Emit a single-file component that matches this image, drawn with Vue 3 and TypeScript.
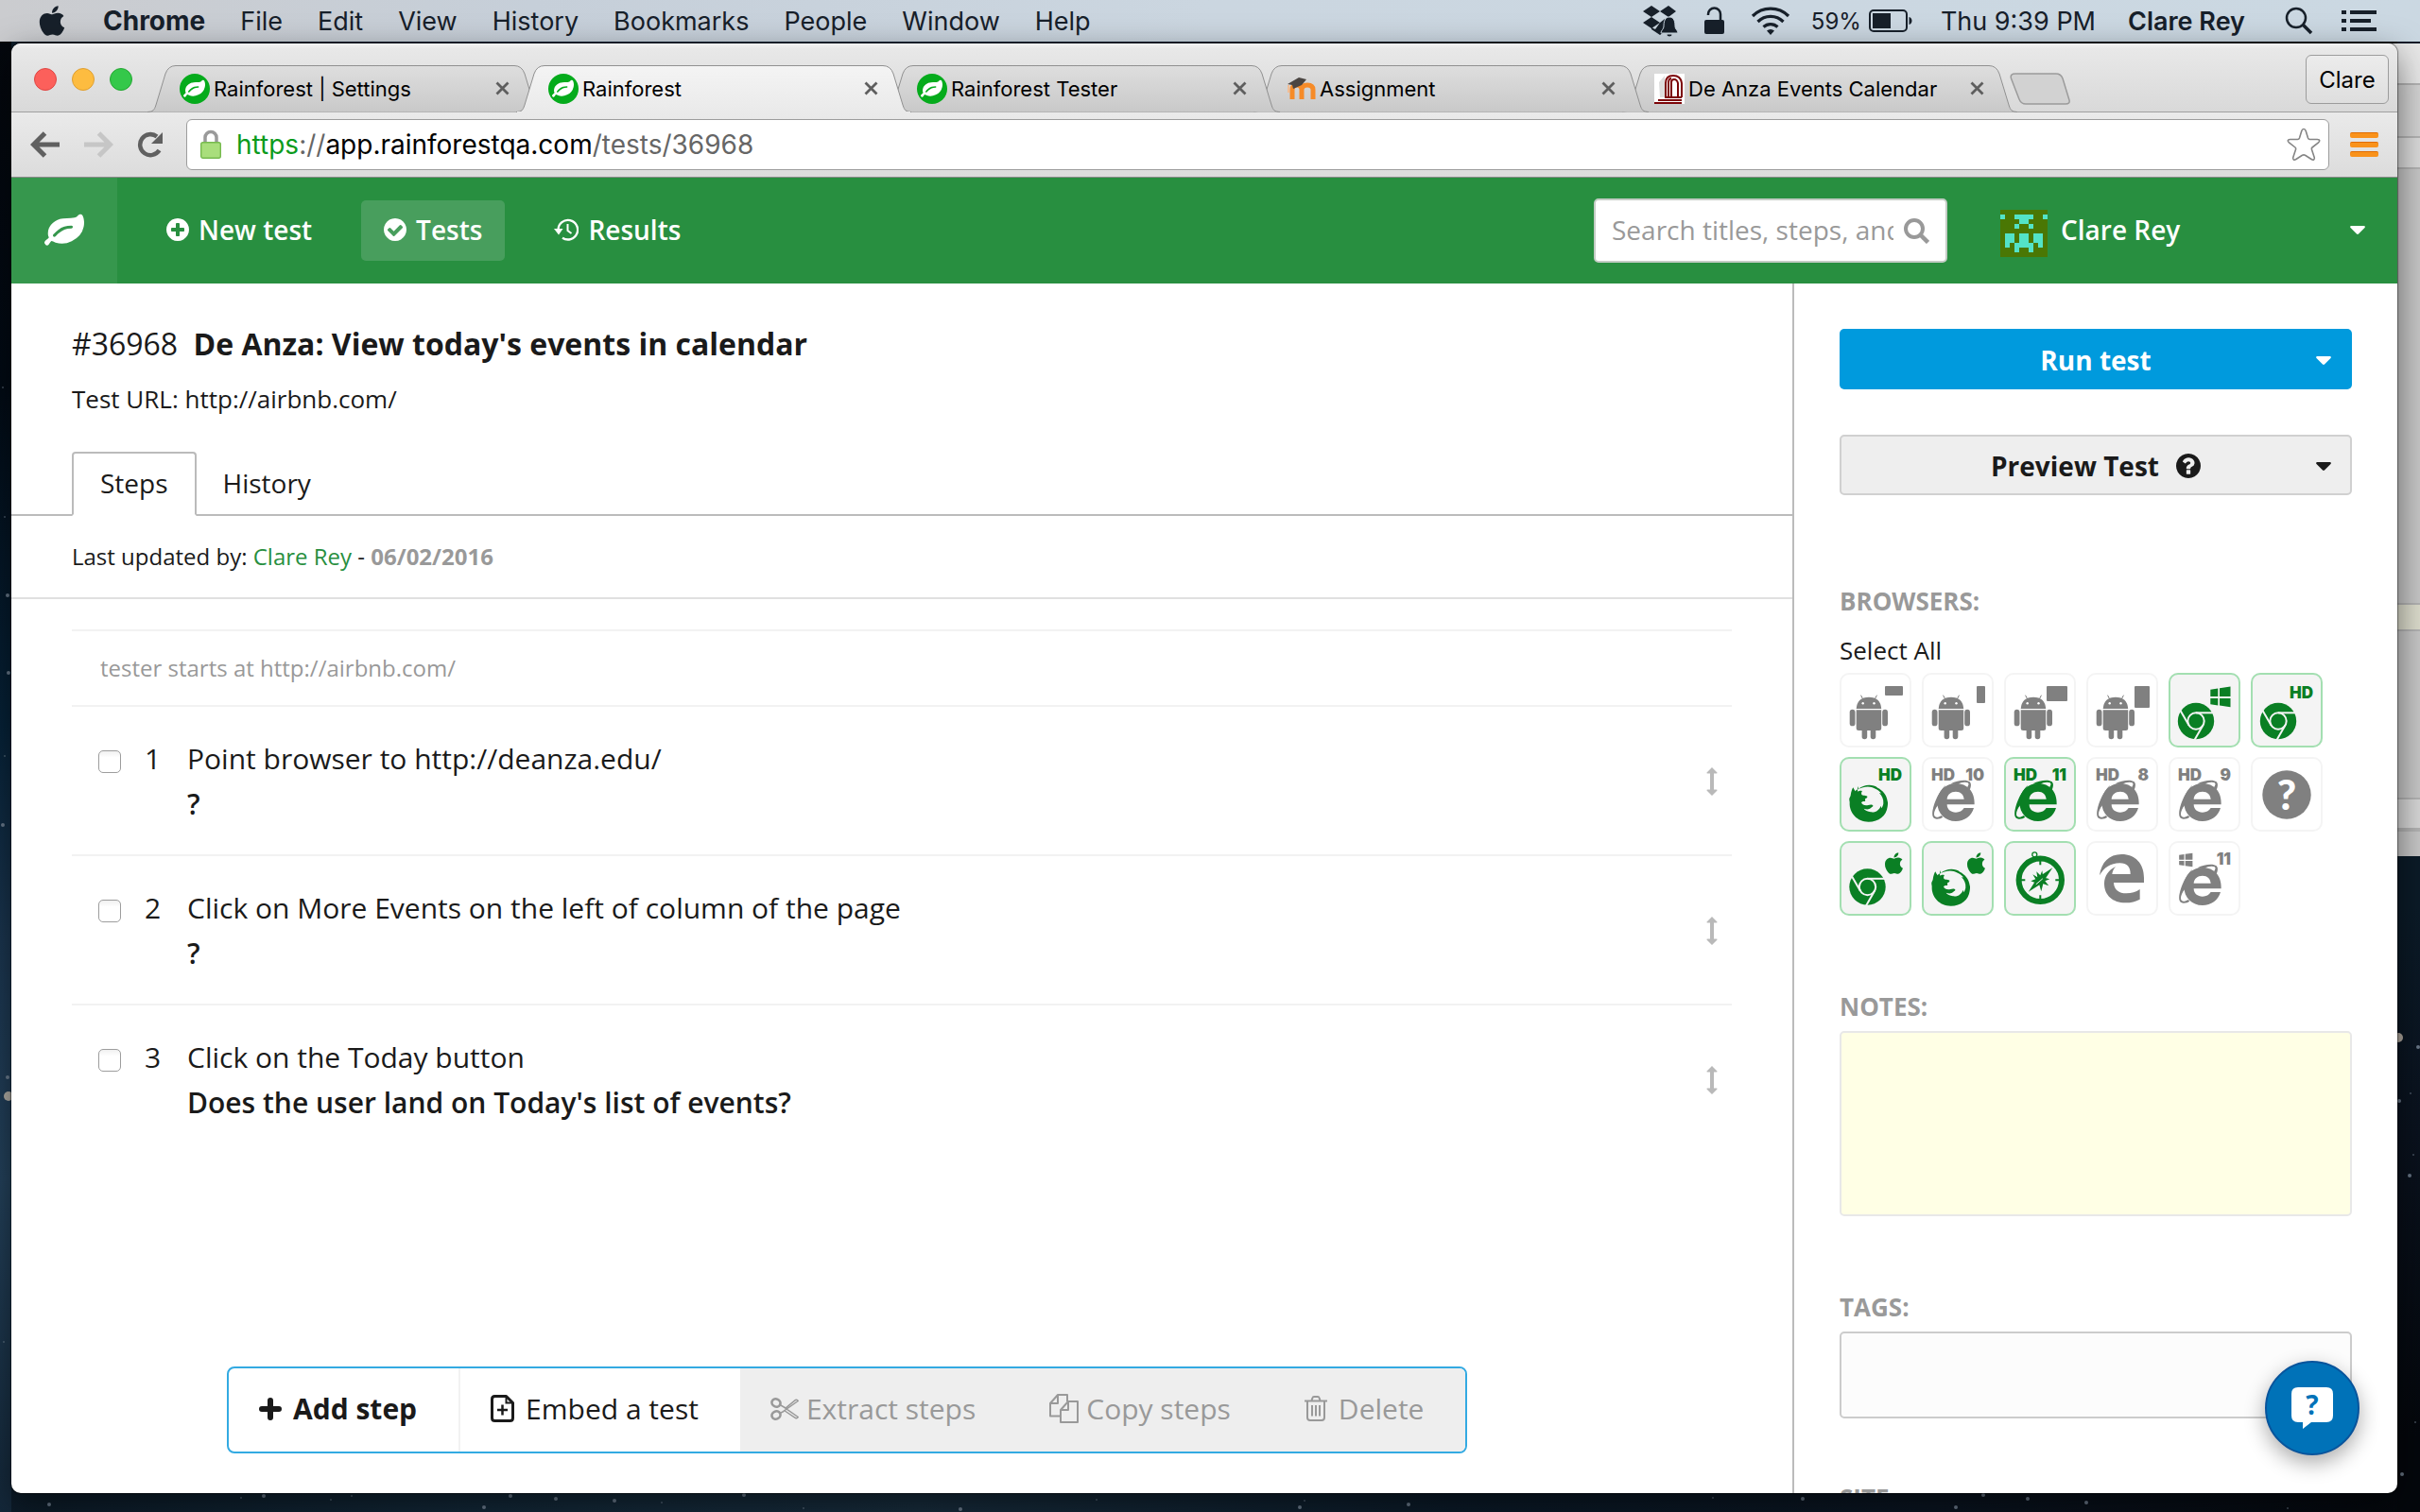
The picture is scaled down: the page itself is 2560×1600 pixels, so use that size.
<script setup lang="ts">
import { ref } from 'vue'

const menus = ['File', 'Edit', 'View', 'History', 'Bookmarks', 'People', 'Window', 'Help']

interface Tab { title: string; icon: 'leaf' | 'moodle' | 'arch'; active?: boolean }
const tabs: Tab[] = [
  { title: 'Rainforest | Settings', icon: 'leaf' },
  { title: 'Rainforest', icon: 'leaf', active: true },
  { title: 'Rainforest Tester', icon: 'leaf' },
  { title: 'Assignment', icon: 'moodle' },
  { title: 'De Anza Events Calendar', icon: 'arch' },
]

const steps = ref([
  { action: 'Point browser to http://deanza.edu/', question: '?', checked: false },
  { action: 'Click on More Events on the left of column of the page', question: '?', checked: false },
  { action: 'Click on the Today button', question: "Does the user land on Today's list of events?", checked: false },
])

interface Browser {
  name: string
  kind: 'android' | 'chrome' | 'firefox' | 'ie' | 'safari' | 'edge' | 'unknown'
  on?: boolean
  screen?: [number, number]
  hd?: 'left' | 'right'
  version?: string
  os?: 'windows' | 'windows-small' | 'apple'
}
const browsers = ref<Browser[]>([
  { name: 'Android phone landscape', kind: 'android', screen: [19, 10] },
  { name: 'Android phone portrait', kind: 'android', screen: [9, 18] },
  { name: 'Android tablet landscape', kind: 'android', screen: [22, 16] },
  { name: 'Android tablet portrait', kind: 'android', screen: [16, 23] },
  { name: 'Chrome on Windows', kind: 'chrome', on: true, os: 'windows' },
  { name: 'Chrome HD', kind: 'chrome', on: true, hd: 'right' },
  { name: 'Firefox HD', kind: 'firefox', on: true, hd: 'right' },
  { name: 'Internet Explorer 10 HD', kind: 'ie', hd: 'left', version: '10' },
  { name: 'Internet Explorer 11 HD', kind: 'ie', on: true, hd: 'left', version: '11' },
  { name: 'Internet Explorer 8 HD', kind: 'ie', hd: 'left', version: '8' },
  { name: 'Internet Explorer 9 HD', kind: 'ie', hd: 'left', version: '9' },
  { name: 'Other browser', kind: 'unknown' },
  { name: 'Chrome on OS X', kind: 'chrome', on: true, os: 'apple' },
  { name: 'Firefox on OS X', kind: 'firefox', on: true, os: 'apple' },
  { name: 'Safari', kind: 'safari', on: true },
  { name: 'Edge', kind: 'edge' },
  { name: 'Internet Explorer 11 on Windows', kind: 'ie', os: 'windows-small', version: '11' },
])

const avatarRows = ['', '0345 69', '45', '36', '', '124578', '124578', '134568', '36', '']
const avatarCells = avatarRows.flatMap((row, y) => [...row.replace(' ', '')].map((x) => ({ x: Number(x), y })))

const stars = [
  [3, 410, 1], [5, 547, 1], [8, 630, 2], [9, 712, 2], [3, 873, 2], [5, 800, 1], [8, 1140, 2], [9, 1160, 5], [4, 1420, 1],
  [52, 1592, 2], [255, 1585, 1], [279, 1583, 2], [350, 1587, 1], [372, 1583, 1], [512, 1595, 2], [540, 1583, 2], [588, 1586, 2],
  [650, 1588, 2], [700, 1590, 1], [787, 1582, 2], [850, 1596, 1], [1016, 1597, 2], [1160, 1587, 1], [1375, 1595, 2], [1380, 1588, 1],
  [1490, 1592, 2], [1812, 1585, 1], [1907, 1586, 2], [2069, 1595, 2], [2098, 1582, 2], [2145, 1586, 2], [2207, 1590, 2], [2420, 1596, 1],
  [2537, 1098, 5], [2558, 1108, 2], [2550, 1157, 1], [2538, 1165, 2], [2549, 1244, 2], [2555, 1505, 1], [2541, 1560, 2], [2553, 1222, 1],
]

const search = ref('')
const notes = ref('')
const tags = ref('')

const disc = 'm0 0M1664 896q0 209-103 385.5t-279.5 279.5-385.5 103-385.5-103-279.5-279.5-103-385.5 103-385.5 279.5-279.5 385.5-103 385.5 103 279.5 279.5 103 385.5z'
const plusDisc = 'M1344 960v-128q0-26-19-45t-45-19h-256v-256q0-26-19-45t-45-19h-128q-26 0-45 19t-19 45v256h-256q-26 0-45 19t-19 45v128q0 26 19 45t45 19h256v256q0 26 19 45t45 19h128q26 0 45-19t19-45v-256h256q26 0 45-19t19-45z' + disc
const checkDisc = 'M1412 734q0-28-18-46l-91-90q-19-19-45-19t-45 19l-408 407-226-226q-19-19-45-19t-45 19l-91 90q-18 18-18 46 0 27 18 45l362 362q19 19 45 19 27 0 46-19l543-543q18-18 18-45z' + disc
const questionDisc = 'M1024 1376v-192q0-14-9-23t-23-9h-192q-14 0-23 9t-9 23v192q0 14 9 23t23 9h192q14 0 23-9t9-23zm256-672q0-88-55.5-163t-138.5-116-170-41q-243 0-371 213-15 24 8 42l132 100q7 6 19 6 16 0 25-12 53-68 86-92 34-24 86-24 48 0 85.5 26t37.5 59q0 38-20 61t-68 45q-63 28-115.5 86.5t-52.5 125.5v36q0 14 9 23t23 9h192q14 0 23-9t9-23q0-19 21.5-49.5t54.5-49.5q32-18 49-28.5t46-35 44.5-48 28-60.5 12.5-81z' + disc
const leaf = 'M1280 704q0-26-19-45t-45-19q-172 0-318 49.5t-259.5 134-235.5 219.5q-19 21-19 45 0 26 19 45t45 19q24 0 45-19 27-24 74-71t67-66q137-124 268.5-176t313.5-52q26 0 45-19t19-45zm512-198q0 95-20 193-46 224-184.5 383t-357.5 268q-214 108-438 108-148 0-286-47-15-5-88-42t-96-37q-16 0-39.5 32t-45 70-52.5 70-60 32q-43 0-63.5-17.5t-45.5-59.5q-2-4-6-11t-5.5-10-3-9.5-1.5-13.5q0-35 31-73.5t68-65.5 68-56 31-48q0-4-14-38t-16-44q-9-51-9-104 0-115 43.5-220t119-184.5 170.5-139 204-95.5q55-18 145-25.5t179.5-9 178.5-6 163.5-24 113.5-56.5l29.5-29.5 29.5-28 27-20 36.5-16 43.5-4.5q39 0 70.5 46t47.5 112 24 124 8 96z'
const apple = 'M318.7 268.7c-.2-36.7 16.4-64.4 50-84.8-18.8-26.9-47.2-41.7-84.7-44.6-35.5-2.8-74.3 20.7-88.5 20.7-15 0-49.4-19.7-76.4-19.7C63.3 141.2 4 184.8 4 273.5q0 39.3 14.4 81.2c12.8 36.7 59 126.7 107.2 125.2 25.2-.6 43-17.9 75.8-17.9 31.8 0 48.3 17.9 76.4 17.9 48.6-.7 90.4-82.5 102.6-119.3-65.2-30.7-61.7-90-61.7-91.9zm-56.6-164.2c27.3-32.4 24.8-61.9 24-72.5-24.1 1.4-52 16.4-67.9 34.9-17.5 19.8-27.8 44.3-25.6 71.9 26.1 2 49.9-11.4 69.5-34.3z'
</script>

<template>
  <div class="desktop">
    <svg class="stars" aria-hidden="true">
      <circle v-for="([x, y, r], i) in stars" :key="i" :cx="x" :cy="y" :r="r" :fill="r > 3 ? '#d9cdbd' : '#7f8fa0'" :opacity="r === 1 ? 0.5 : 0.8" />
    </svg>

    <header class="menubar">
      <svg class="apple" viewBox="0 28 384 456"><path :d="apple" fill="currentColor" /></svg>
      <b>Chrome</b>
      <span v-for="m in menus" :key="m">{{ m }}</span>
      <div class="status">
        <svg width="37" height="34" viewBox="0 0 37 34" fill="currentColor">
          <path d="M9 1l9 6-9 6-9-6zM27 1l8 6-8 6-9-6zM9 13l9 6-9 6-9-6zM18 19l5-4 3 2-4 6v6l-4 3-9-6v-2l4 2z" />
          <path d="M28 13c5 0 6 5 6 10 0 3 3 4 3 7H19c0-3 3-4 3-7 0-5 1-10 6-10zM25 31h6c0 4-6 4-6 0z" stroke="#cbd7e1" stroke-width="1" />
        </svg>
        <svg class="open-lock" width="21" height="30" viewBox="0 0 21 30"><rect y="14" width="21" height="15" rx="2" fill="currentColor" /><path d="M4 9V8a6.500 6.500 0 0 1 13 0v7" fill="none" stroke="currentColor" stroke-width="2.500" /></svg>
        <svg class="wifi" width="42" height="30" viewBox="0 0 42 30" fill="none" stroke="currentColor" stroke-width="3.200"><path d="M2 10a27 27 0 0 1 38 0M7.500 16a19 19 0 0 1 27 0M13.500 21.500a11 11 0 0 1 15 0" /><path d="M17 25.500a6 6 0 0 1 8 0l-4 4.500z" fill="currentColor" stroke="none" /></svg>
        <span class="percent">59%</span>
        <svg class="battery" width="46" height="24" viewBox="0 0 46 24"><rect x="1" y="1" width="39" height="22" rx="4" fill="none" stroke="currentColor" stroke-width="2" /><rect x="4" y="4" width="19" height="16" fill="currentColor" /><path d="M42.500 8c4 1 4 7 0 8z" fill="currentColor" /></svg>
        <span class="clock">Thu 9:39 PM</span>
        <span class="user">Clare Rey</span>
        <svg class="spot" width="30" height="30" viewBox="0 0 30 30" fill="none" stroke="currentColor" stroke-width="2.500"><circle cx="12" cy="12" r="10" /><path d="M19 19l9 9" stroke-width="3.500" /></svg>
        <svg width="37" height="22" viewBox="0 0 37 22" fill="currentColor"><path d="M0 0h5v4H0zM9 0h28v4H9zM0 9h5v4H0zM9 9h22v4H9zM0 18h5v4H0zM9 18h28v4H9z" /></svg>
      </div>
    </header>

    <div class="behind" aria-hidden="true">
      <i class="b-title"></i><i class="b-tabs"></i><i class="b-tool"></i><i class="b-page"></i><i class="b-note"></i><i class="b-page2"></i><i class="b-foot"></i><i class="b-end"></i>
    </div>

    <div class="window">
      <div class="titlebar">
        <div class="lights"><i class="red"></i><i class="yellow"></i><i class="green"></i></div>
        <div class="tabs">
          <div v-for="(t, i) in tabs" :key="i" class="tab" :class="{ active: t.active }" :style="{ zIndex: t.active ? 9 : 5 - i }">
            <svg class="tab-shape" viewBox="0 0 418 51" aria-hidden="true">
              <defs>
                <linearGradient :id="'tab' + i" x1="0" y1="0" x2="0" y2="1">
                  <stop offset="0" :stop-color="t.active ? '#f4f4f4' : '#dedede'" />
                  <stop offset="1" :stop-color="t.active ? '#eaeaea' : '#c9c9c9'" />
                </linearGradient>
              </defs>
              <path d="M0 49.500C6 49 7 48 9 42L19 9Q22 .5 30 .5H388Q396 .5 399 9L409 42C411 48 412 49 418 49.500" :fill="`url(#tab${i})`" stroke="#909090" />
              <path v-if="t.active" d="M1 50.500H417" stroke="#eaeaea" stroke-width="3" />
            </svg>
            <svg class="favicon" viewBox="0 0 32 32">
              <template v-if="t.icon === 'leaf'">
                <circle cx="16" cy="16" r="16" fill="#05ab1c" />
                <svg x="4" y="5" width="23" height="23" viewBox="0 0 1792 1792"><path :d="leaf" fill="#fff" /></svg>
              </template>
              <template v-else-if="t.icon === 'moodle'">
                <path d="M7 27V17q0-5 5-5t5 5v10m0-10q0-5 6-5t6 5v10" fill="none" stroke="#f68b28" stroke-width="5" />
                <path d="M2 11L14 4l8 2-5 6-9 4-1-4z" fill="#4a4542" /><path d="M3 12v8" stroke="#f3bd94" stroke-width="2" />
              </template>
              <template v-else>
                <rect width="32" height="32" fill="#fff" />
                <path d="M5 9l6-7v23H6z" fill="#ddd" />
                <path d="M12 25V10q0-8 8-8t9 8v15M15 25V10q0-5 3-5M18 25V9q0-3 3-3t4 4v15M11 25h18" fill="none" stroke="#7c0508" stroke-width="2" />
                <path d="M4 28h25M0 31h29" stroke="#7c0508" stroke-width="2" />
              </template>
            </svg>
            <span class="tab-title">{{ t.title }}</span>
            <button class="close" aria-label="Close tab"><svg width="15" height="15" viewBox="0 0 15 15"><path d="M1.500 1.500l12 12m0-12l-12 12" stroke="#5e5e5e" stroke-width="2.800" /></svg></button>
          </div>
          <button class="new-tab" aria-label="New tab">
            <svg width="64" height="34" viewBox="0 0 64 34"><path d="M6 1H49Q54 1 56 6L63 29Q64 33 59 33H17Q12 33 10 28L1.500 6Q0 1 6 1z" fill="#d2d2d2" stroke="#9b9b9b" stroke-width="1.500" /></svg>
          </button>
        </div>
        <button class="profile">Clare</button>
      </div>

      <div class="toolbar">
        <button aria-label="Back"><svg width="32" height="28" viewBox="0 0 32 28" fill="none" stroke="#606060" stroke-width="5"><path d="M3 14H31M15.500 2L3.500 14l12 12" /></svg></button>
        <button aria-label="Forward"><svg width="32" height="28" viewBox="0 0 32 28" fill="none" stroke="#c6c6c6" stroke-width="5"><path d="M29 14H1M16.500 2l12 12-12 12" /></svg></button>
        <button aria-label="Reload"><svg width="29" height="28" viewBox="0 0 29 28"><path d="M24.500 20A11 11 0 1 1 22 5.500" fill="none" stroke="#606060" stroke-width="4.500" /><path d="M28 1v12H16z" fill="#606060" /></svg></button>
        <div class="omnibox">
          <svg width="22" height="32" viewBox="0 0 22 32"><path d="M5 15V8.500a6 6 0 0 1 12 0V15" fill="none" stroke="#9a9a9a" stroke-width="3.500" /><rect x=".7" y="13.700" width="20.600" height="16.600" rx="2" fill="#a9de7c" stroke="#76ba4e" stroke-width="1.400" /></svg>
          <p class="url"><em>https</em>://<b>app.rainforestqa.com</b>/tests/36968</p>
          <svg class="star" width="36" height="36" viewBox="0 0 36 36"><path d="M18 1.500q1.500 0 2.200 2L22.500 11q.5 1.500 2 1.500h8q2 0 2.200 1T33.500 16l-6.500 5q-1 .8-.6 2l2.800 8.500q.6 2-.5 2.500t-2.600-.5L19.500 29.300q-1.500-.8-3 0L9.900 33.500q-1.500 1-2.600.5t-.5-2.500L9.600 23q.4-1.200-.6-2l-6.500-5Q1 14.500 1.300 13.500t2.200-1h8q1.500 0 2-1.500l2.300-7.500q.7-2 2.200-2z" fill="#fff" stroke="#858585" stroke-width="1.600" /></svg>
        </div>
        <button class="burger" aria-label="Menu"><i></i><i></i><i></i></button>
      </div>

      <nav class="appbar">
        <a href="#" class="logo" aria-label="Home"><svg width="42" height="36" viewBox="0 100 1792 1536"><path :d="leaf" fill="#fff" /></svg></a>
        <a href="#" class="nav-item"><svg width="24" height="24" viewBox="128 128 1536 1536"><path :d="plusDisc" fill="#fff" fill-rule="evenodd" /></svg>New test</a>
        <a href="#" class="nav-item current"><svg width="24" height="24" viewBox="128 128 1536 1536"><path :d="checkDisc" fill="#fff" fill-rule="evenodd" /></svg>Tests</a>
        <a href="#" class="nav-item"><svg width="26" height="24" viewBox="0 0 26 24"><path d="M4.500 12A10.300 10.300 0 1 1 9 20.700" fill="none" stroke="#fff" stroke-width="2.300" /><path d="M0 11h9.500L5 17.500z" fill="#fff" /><path d="M14.500 6v7l4 3" fill="none" stroke="#fff" stroke-width="2" /></svg>Results</a>
        <label class="search">
          <input v-model="search" type="text" placeholder="Search titles, steps, and tags" aria-label="Search titles, steps, and tags">
          <svg width="27" height="27" viewBox="0 0 27 27" fill="none" stroke="#999"><circle cx="11" cy="11" r="9" stroke-width="4" /><path d="M17.500 17.500l8 8" stroke-width="4.500" /></svg>
        </label>
        <button class="account">
          <svg class="avatar" width="50" height="50" viewBox="0 0 10 10" shape-rendering="crispEdges"><rect width="10" height="10" fill="#4a7704" /><rect v-for="(c, i) in avatarCells" :key="i" :x="c.x" :y="c.y" width="1" height="1" fill="#53e3c8" /></svg>
          Clare Rey
          <svg class="caret" width="16" height="9" viewBox="0 0 16 9"><path d="M1 0h14q1.500.5.5 2L9 8.500q-1 .8-2 0L.5 2Q-.5.5 1 0z" fill="currentColor" /></svg>
        </button>
      </nav>

      <div class="page">
        <main class="main">
          <div class="head">
            <h1><span>#36968</span> De Anza: View today's events in calendar</h1>
            <p>Test URL: http://airbnb.com/</p>
          </div>
          <div class="page-tabs" role="tablist">
            <button role="tab" class="selected" aria-selected="true">Steps</button>
            <button role="tab" aria-selected="false">History</button>
          </div>
          <p class="updated">Last updated by: <a href="#">Clare Rey</a> - <b>06/02/2016</b></p>
          <ol class="steps">
            <li class="start">tester starts at http://airbnb.com/</li>
            <li v-for="(s, i) in steps" :key="i" class="step">
              <input :id="`step${i}`" v-model="s.checked" type="checkbox">
              <span class="num">{{ i + 1 }}</span>
              <label :for="`step${i}`">{{ s.action }}<strong>{{ s.question }}</strong></label>
              <svg class="drag" width="12" height="30" viewBox="0 0 12 30"><path d="M6 0l5.500 5.500q.5 1-1 1H8v17h2.500q1.500 0 1 1L6 30 .5 24.500q-.5-1 1-1H4v-17H1.500q-1.500 0-1-1z" fill="#b9b9b9" /></svg>
            </li>
          </ol>
          <div class="actions">
            <button class="add"><svg width="24" height="24" viewBox="0 0 24 24"><path d="M12 3v18M3 12h18" stroke="currentColor" stroke-width="6" stroke-linecap="round" /></svg>Add step</button>
            <button><svg width="25" height="29" viewBox="0 0 25 29" fill="none" stroke="currentColor" stroke-width="3"><path d="M4.500 1.500H16.500l7 7V24.500q0 3-3 3H4.500q-3 0-3-3V4.500q0-3 3-3z" stroke-linejoin="round" /><path d="M16.500 2v6.500h6.500" stroke-width="2" /><path d="M12.500 10.500v11M7 16h11" stroke-width="2.500" /></svg>Embed a test</button>
            <button class="tight" disabled><svg width="30" height="24" viewBox="0 0 30 24" fill="none" stroke="currentColor"><ellipse cx="6" cy="5.500" rx="4.600" ry="4" stroke-width="2.600" transform="rotate(25 6 5.500)" /><ellipse cx="6" cy="18.500" rx="4.600" ry="4" stroke-width="2.600" transform="rotate(-25 6 18.500)" /><path d="M10 7.500L16 11 26.500 2.500q2-.7 2.700 1L12 15.500l-2.500 1M10 16.500l4-2M14 9.800L29.200 20.500q-.7 1.700-2.700 1L14.500 13.500" stroke-width="1.500" /></svg>Extract steps</button>
            <button class="tight" disabled><svg width="31" height="31" viewBox="0 0 31 31" fill="none" stroke="currentColor" stroke-width="2" stroke-linejoin="round"><path d="M12 23.500H1V10L9 1h10v7M1 10h8V1M12 30V17l8-9h10v22zM12 17h8V8" /></svg>Copy steps</button>
            <button disabled><svg width="24" height="27" viewBox="0 0 24 27" fill="none" stroke="currentColor" stroke-width="2"><path d="M0 5.500h24M3 5.500V23q0 3 3 3h12q3 0 3-3V5.500M7.500 5l1-3q.3-1 1.500-1h4q1.200 0 1.500 1l1 3M8 10v11.500M12 10v11.500M16 10v11.500" /></svg>Delete</button>
          </div>
        </main>

        <aside class="side">
          <button class="run">Run test<svg class="caret" width="16" height="9" viewBox="0 0 16 9"><path d="M1 0h14q1.500.5.5 2L9 8.500q-1 .8-2 0L.5 2Q-.5.5 1 0z" fill="currentColor" /></svg></button>
          <button class="preview">Preview Test<svg width="26" height="26" viewBox="128 128 1536 1536"><path :d="questionDisc" fill="currentColor" fill-rule="evenodd" /></svg><svg class="caret" width="16" height="9" viewBox="0 0 16 9"><path d="M1 0h14q1.500.5.5 2L9 8.500q-1 .8-2 0L.5 2Q-.5.5 1 0z" fill="currentColor" /></svg></button>

          <h2 class="browsers-title">Browsers:</h2>
          <a href="#" class="select-all">Select All</a>
          <div class="tiles">
            <button v-for="b in browsers" :key="b.name" class="tile" :class="{ on: b.on }" :aria-label="b.name" :aria-pressed="!!b.on" @click="b.on = !b.on">
              <svg width="76" height="79" viewBox="0 0 76 79" fill="currentColor">
                <g v-if="b.kind === 'android'">
                  <path d="M17.700 38q1-12.300 13.300-12.300T44.200 38zM17.700 39.200h26.500V58.500q0 2.500-2.500 2.500h-3.400v6.500a2.800 2.800 0 0 1-5.600 0V61h-3.500v6.500a2.800 2.800 0 0 1-5.600 0V61h-3.400q-2.500 0-2.500-2.500z" />
                  <rect x="10.700" y="38.700" width="5.800" height="17.600" rx="2.900" /><rect x="45.200" y="38.700" width="5.800" height="17.600" rx="2.900" />
                  <path d="M22.500 23.700l2.200 4M39.500 23.700l-2.200 4" stroke="currentColor" /><circle cx="24.700" cy="32.300" r="1.200" fill="#fff" /><circle cx="36.500" cy="32.300" r="1.200" fill="#fff" />
                  <rect v-if="b.screen" :x="67 - b.screen[0]" y="14" :width="b.screen[0]" :height="b.screen[1]" rx="1" />
                </g>
                <g v-else-if="b.kind === 'chrome'" :transform="b.os === 'apple' ? 'translate(29.500 48.500)' : 'translate(29 51)'">
                  <circle r="19.200" />
                  <g fill="none" stroke="#f4f4f4" stroke-width="2"><circle r="8.700" /><path v-for="a in [0, 120, 240]" :key="a" d="M0-8.700H19.500" :transform="`rotate(${a})`" /></g>
                </g>
                <path v-else-if="b.kind === 'firefox'" transform="scale(.33333) translate(-78 -306)" fill-rule="evenodd" d="M121 403c2 5 5 9 7 12c2-4 6-5 9-6c16-16 46-18 62-5c16 8 28 22 31 42c2 5 1 12 0 18c-3 28-28 48-60 48c-36 0-62-28-60-62c0-4-2-8-1-12c1-4 3-6 4-10c2-12 4-19 8-25zM138 408c20-11 42-10 57 1c7 4 13 9 15 13c-2-1-4-1-6-1c9 9 14 20 13 33c-1 7-3 11-6 15c-1-3-1-5-2-8c-5 13-15 22-32 20c-10-2-19-5-22-11c8 3 17 3 21-1c4-3 9-5 8-9c-2-4-10-3-15-1c-10 3-19-1-22-8c2-4 8-5 12-4c1-4 0-6 0-8c5-3 8-4 7-8c-1-3-16-2-18-6c-2-3 0-8 2-11c-7-1-8-2-14 2c-1-3-2-12 2-17z" />
                <g v-else-if="b.kind === 'ie'" transform="scale(.33333) translate(-336 -306)">
                  <path fill-rule="evenodd" d="M503 457H416c0 16 12 25 28 25c12 0 20-5 26-14H501c-7 26-30 42-57 42c-34 0-59-24-59-60c0-36 26-60 59-60c36 0 61 26 59 67zM416 440h54c-1-15-11-24-26-24c-16 0-27 9-28 24z" />
                  <path d="M412 395C392 414 376 445 370 478C368 495 372 503 384 503C392 503 398 500 403 497L398 492C388 499 377 500 375 490C374 480 380 468 388 458L398 420zM428 391C448 380 478 376 488 385C495 392 491 404 488 411L480 403C485 396 486 391 482 388C474 384 460 387 450 392z" />
                </g>
                <g v-else-if="b.kind === 'safari'" transform="translate(38.300 41.300)">
                  <circle r="22.700" fill="none" stroke="currentColor" stroke-width="6" /><circle cx="-6" cy="-27" r="2.500" fill="none" stroke="currentColor" stroke-width="1.300" />
                  <path d="M13-13L2.500 3-12.500 12.500-3-2.500zM-4-9L0-5 2-10 3-3 10-1 5 1 9 6 3 4 1 12-1 5-6 7-5 3-10 1-5-1-8-6-3-3zM-1-21h2v5h-2zM-1 16h2v5h-2zM16-1h5v2h-5zM-21-1h5v2h-5z" />
                  <path d="M-4.500 4.500L2.500-1.500" stroke="#f4f4f4" />
                </g>
                <path v-else-if="b.kind === 'edge'" transform="scale(.33333) translate(-858 -573)" d="M900 682C906 640 930 615 970 615C1014 615 1041 645 1041 690V705H945C946 728 962 739 985 739C1002 739 1015 735 1028 726V758C1015 765 1000 769 982 769C942 769 915 745 915 708C915 683 930 664 951 654C944 662 941 670 940 678H998C998 656 988 643 964 643C935 643 914 658 900 682z" />
                <g v-else>
                  <circle cx="38" cy="40" r="25.700" /><text x="38" y="56" class="mark">?</text>
                </g>
                <path v-if="b.os === 'windows' || b.os === 'windows-small'" :transform="b.os === 'windows' ? '' : 'translate(-18.500 3) scale(.67)'" d="M44.300 17.700l8-1.200V25h-8zM54 16.200l11.500-1.700V25H54zM44.300 27h8v7.500l-8-1.200zM54 27h11.500v9.200L54 34.600z" />
                <svg v-if="b.os === 'apple'" x="48" y="12" width="19" height="23" viewBox="4 32 376 448"><path :d="apple" /></svg>
                <text v-if="b.hd === 'right'" x="66" :y="b.kind === 'chrome' ? 27 : 25" class="badge end">HD</text>
                <text v-if="b.hd === 'left'" x="10" y="25" class="badge">HD</text>
                <text v-if="b.version" x="66" y="25" class="badge end">{{ b.version }}</text>
              </svg>
            </button>
          </div>

          <label class="field" for="notes">Notes:</label>
          <textarea id="notes" v-model="notes" class="notes"></textarea>
          <label class="field" for="tags">Tags:</label>
          <div class="tagbox"><input id="tags" v-model="tags" type="text"><svg width="26" height="36" viewBox="128 -172 1536 2136"><path :d="questionDisc" fill="#999" fill-rule="evenodd" /></svg></div>
          <h2 class="site">Site:</h2>
        </aside>
      </div>

      <button class="chat" aria-label="Help">
        <svg width="44" height="44" viewBox="0 0 44 44"><path d="M7 0H37q7 0 7 7V30q0 7-7 7H21l-9 7V37H7Q0 37 0 30V7Q0 0 7 0z" fill="#fff" /><text x="22" y="29" class="chat-mark">?</text></svg>
      </button>
    </div>
  </div>
</template>

<style>
body { margin: 0; overflow: hidden; }
</style>

<style scoped>
* { box-sizing: border-box; }
.desktop {
  position: relative; height: 100vh; display: flex; flex-direction: column; overflow: hidden;
  background:
    linear-gradient(#04070c, #020a14 25%, #062238 48%, #1b3650 62%, #24425c 78%, #14283a) left / 12px 100% no-repeat,
    linear-gradient(#0b1b28 0, #0b1b28 60%, #0a121e 75%, #04070c 95%) right / 24px 100% no-repeat,
    linear-gradient(90deg, #0c1b28, #122737 20%, #172c3c 38%, #0b1a28 60%, #0a1420 80%, #04070c);
  color: #1a1a1a; font-family: "Open Sans", "Noto Sans", sans-serif; font-size: 28px;
}
button, input, textarea { font: inherit; color: inherit; }
button { padding: 0; border: 0; background: none; }
svg { flex: none; }
a { color: inherit; text-decoration: none; }
p, h1, h2, ol { margin: 0; padding: 0; }
.stars { position: absolute; inset: 0; width: 100%; height: 100%; }

.menubar {
  position: relative; flex: none; display: flex; align-items: center; height: 44px; padding: 0 46px 0 41px; gap: 37px;
  background: linear-gradient(90deg, #cbcccf, #c6cfd9 22%, #cbd6e0 50%, #cbd8e2);
  color: #17202a; font-family: Inter, Roboto, sans-serif; font-size: 27px; white-space: nowrap;
}
.menubar b { font-size: 28px; font-weight: 700; }
.apple { width: 28px; height: 32px; margin-right: 3px; }
.status { display: flex; align-items: center; margin-left: auto; }
.open-lock { margin-left: 28px; }
.wifi { margin-left: 28px; }
.percent { margin-left: 22px; font-size: 24px; }
.battery { margin-left: 8px; }
.clock { margin-left: 30px; }
.user { margin-left: 34px; font-weight: 600; }
.spot { margin: 0 30px 0 42px; }

.behind { position: absolute; top: 46px; right: 0; width: 60px; height: 860px; display: flex; flex-direction: column; background: #c8c8c8; }
.behind i { border-bottom: 2px solid #b4b4b4; }
.b-title { flex: 0 0 44px; background: #e8e8e8; }
.b-tabs { flex: 0 0 56px; background: #d4d4d4; }
.b-tool { flex: 0 0 33px; background: #dcdcdc; }
.b-page { flex: 0 0 461px; }
.b-note { flex: 0 0 28px; background: #dedece; }
.b-page2 { flex: 0 0 178px; }
.b-foot { flex: 0 0 32px; background: #d8d8d8; }

.window {
  position: relative; flex: 1; min-height: 0; display: flex; flex-direction: column; margin: 2px 24px 20px 12px;
  border-radius: 10px; overflow: hidden; background: #fff; box-shadow: 0 0 1px 1px #0006, 0 12px 36px #0008;
}
.titlebar {
  flex: none; display: flex; height: 73px; padding: 0 9px 0 24px; border-bottom: 1px solid #a0a0a0;
  background: linear-gradient(#f2f2f2 0, #e8e8e8 8%, #d9d9d9); font-family: Inter, Roboto, sans-serif; font-size: 22px; color: #000;
}
.lights { display: flex; gap: 16px; padding-top: 26px; }
.lights i { width: 24px; height: 24px; border-radius: 50%; }
.red { background: #fc605b; border: 1px solid #df4643; }
.yellow { background: #fdbc40; border: 1px solid #df9f30; }
.green { background: #34c84a; border: 1px solid #24a732; }
.tabs { display: flex; flex: 1; margin-left: 16px; padding-top: 23px; }
.tab { position: relative; display: flex; align-items: center; width: 418px; height: 49px; margin-right: -28px; padding: 0 35px 0 34px; }
.tab-shape { position: absolute; left: 0; top: 0; width: 418px; height: 51px; }
.favicon { position: relative; width: 32px; height: 32px; margin-right: 4px; }
.tab-title { position: relative; flex: 1; white-space: nowrap; }
.close { position: relative; display: flex; }
.new-tab { align-self: flex-start; margin: 8px 0 0 20px; }
.profile {
  align-self: flex-start; width: 88px; height: 52px; margin-top: 12px; border: 1px solid #9c9c9c; border-radius: 6px;
  background: linear-gradient(#ececec, #dedede); font-size: 24px;
}

.toolbar {
  flex: none; display: flex; align-items: center; height: 69px; padding: 0 20px; border-bottom: 1px solid #8b8b8b;
  background: linear-gradient(#eaeaea, #dcdcdc);
}
.toolbar button { display: flex; margin-right: 24px; }
.omnibox {
  flex: 1; display: flex; align-items: center; height: 54px; padding: 0 8px 0 14px; border: 1px solid #9d9d9d; border-radius: 6px;
  background: #fff; font-family: Inter, Roboto, sans-serif; font-size: 28px; color: #666;
}
.url { flex: 1; margin-left: 16px; }
.url em { font-style: normal; color: #0b9b1c; }
.url b { font-weight: 400; color: #000; }
.toolbar .burger { flex-direction: column; gap: 4px; margin: 0 0 0 22px; }
.burger i { width: 30px; height: 6px; border-radius: 2px; background: #f9921b; border-top: 1px solid #e06c00; }

.appbar { flex: none; display: flex; align-items: center; gap: 28px; height: 112px; background: #288f40; color: #fff; font-weight: 600; }
.logo { display: flex; align-items: center; justify-content: center; width: 112px; height: 112px; background: #36974d; }
.nav-item { display: flex; align-items: center; gap: 10px; height: 64px; padding: 0 24px 2px; border-radius: 5px; }
.current { background: #489e5d; }
.search {
  display: flex; align-items: center; width: 374px; height: 68px; margin-left: auto; padding: 0 17px;
  border: 2px solid #c4ccc5; border-radius: 5px; background: #fff;
}
.search input { flex: 1; min-width: 0; margin-right: 11px; padding: 0 0 2px; border: 0; outline: 0; background: none; color: #222; font-weight: 400; }
.search input::placeholder { color: #999; opacity: 1; }
.account { display: flex; align-items: center; gap: 14px; width: 448px; height: 112px; padding: 0 34px 2px 28px; }
.avatar { margin-top: 8px; }
.account .caret { margin-left: auto; }

.page { flex: 1; min-height: 0; display: flex; }
.main { flex: 1; display: flex; flex-direction: column; }
.head { padding: 42px 64px 38px; }
.head h1 { font-size: 32px; line-height: 44px; font-weight: 700; }
.head h1 span { margin-right: 8px; font-weight: 400; }
.head p { margin-top: 18px; font-size: 26px; line-height: 36px; }
.page-tabs { display: flex; padding-left: 64px; border-bottom: 2px solid #bbb; }
.page-tabs button { height: 68px; margin-bottom: -2px; padding: 0 26px 2px; border: 2px solid transparent; }
.page-tabs .selected { padding: 0 28px 2px; border-color: #bbb; border-bottom-color: #fff; border-radius: 4px 4px 0 0; background: #fff; }
.updated { padding: 25px 64px; border-bottom: 2px solid #e0e0e0; font-size: 24px; line-height: 36px; }
.updated a { color: #288f40; }
.updated b { color: #999; font-weight: 700; }
.steps { margin: 32px 64px 0; border-top: 2px solid #f2f2f2; list-style: none; }
.start { padding: 21px 30px; font-size: 24px; line-height: 36px; color: #999; }
.step { display: flex; padding: 31px 15px 29px 28px; border-top: 2px solid #f2f2f2; font-size: 30px; line-height: 48px; }
.step input {
  appearance: none; width: 24px; height: 24px; margin: 15px 25px 0 0; border: 1px solid #9d9d9d; border-radius: 5px;
  background: linear-gradient(#f0f0f0, #fff 30%);
}
.num { width: 45px; }
.step label { flex: 1; }
.step strong { display: block; font-weight: 600; }
.drag { align-self: center; }
.actions {
  display: flex; align-self: flex-start; height: 92px; margin: auto 0 42px 228px; border: 2px solid #33aae2; border-radius: 8px;
  overflow: hidden; background: #fff; font-size: 30px;
}
.actions button { display: flex; align-items: center; gap: 12px; padding: 0 44px 3px 32px; white-space: nowrap; }
.actions .tight { gap: 8px; padding-right: 46px; }
.actions .add { border-right: 2px solid #f2f2f2; font-weight: 700; }
.actions button:disabled { background: #eee; color: #999; }

.side { flex: 0 0 640px; display: flex; flex-direction: column; align-items: stretch; padding: 48px 48px 0; border-left: 2px solid #bbb; overflow: hidden; }
.side > * { flex: none; }
.run, .preview { position: relative; display: flex; align-items: center; justify-content: center; gap: 18px; height: 64px; padding-top: 2px; border-radius: 5px; font-weight: 700; }
.run { background: #009add; color: #fff; }
.preview { margin-top: 48px; border: 2px solid #d0d0d0; background: #eee; }
.run .caret, .preview .caret { position: absolute; right: 22px; }
.preview .caret { right: 20px; }
.side h2, .field { display: block; font-size: 26px; line-height: 36px; font-weight: 700; color: #999; text-transform: uppercase; }
.browsers-title { margin-top: 94px; }
.select-all { margin: 16px 0 6px; font-size: 26px; line-height: 36px; }
.tiles { display: grid; grid-template-columns: repeat(6, 76px); gap: 10px 11px; }
.tile { display: flex; height: 79px; border-radius: 10px; box-shadow: inset 0 0 0 2px #f4f4f4; color: #808080; }
.tile.on { background: #f4f4f4; box-shadow: inset 0 0 0 2px #a3dfb1; color: #0a7f24; }
.badge { font: 900 17px Inter, sans-serif; }
.end { text-anchor: end; }
.mark { font: 900 44px Lato, sans-serif; fill: #fff; text-anchor: middle; }
.field { margin: 78px 0 8px; }
.notes { height: 196px; padding: 12px; border: 2px solid #e8e8e8; border-radius: 5px; background: #ffffe5; resize: none; }
.tagbox { display: flex; align-items: center; height: 92px; padding: 0 24px 0 14px; border: 2px solid #ccc; border-radius: 5px; background: #fcfcfc; }
.tagbox input { flex: 1; border: 0; outline: 0; background: none; }
.side .site { margin-top: 66px; }
.chat {
  position: absolute; right: 40px; bottom: 40px; z-index: 20; display: flex; align-items: center; justify-content: center;
  width: 100px; height: 100px; border: 2px solid #08549c; border-radius: 50%; background: #0072b8; box-shadow: 0 8px 22px #0005;
}
.chat-mark { font: 700 28px "Open Sans", sans-serif; fill: #0072b8; text-anchor: middle; }
</style>
